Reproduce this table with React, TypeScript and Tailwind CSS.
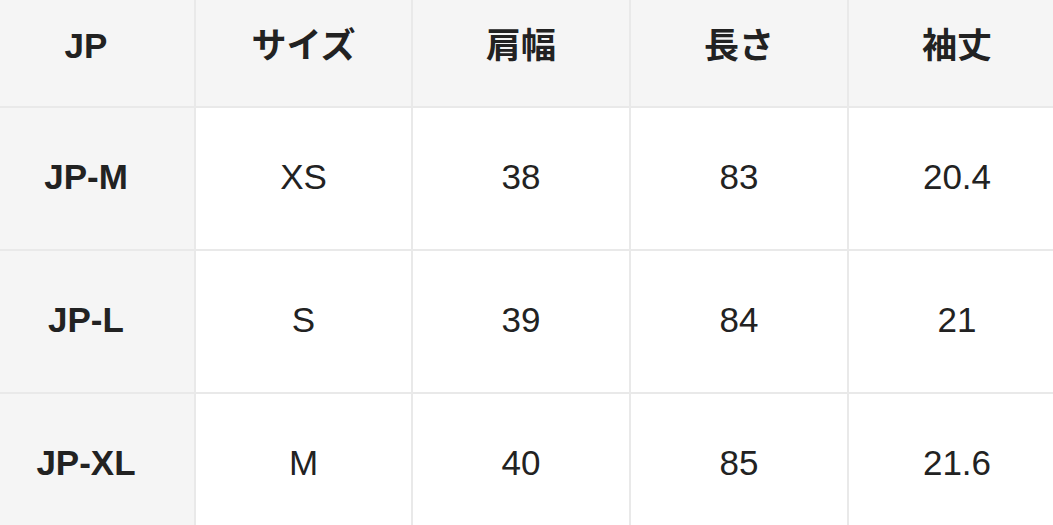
import React from "react";

const headers = ["JP", "サイズ", "肩幅", "長さ", "袖丈"];
const rows = [
  ["JP-M", "XS", "38", "83", "20.4"],
  ["JP-L", "S", "39", "84", "21"],
  ["JP-XL", "M", "40", "85", "21.6"],
];

export default function App() {
  return (
    <div
      className="w-[1053px] h-[525px] overflow-hidden bg-white"
      style={{ fontFamily: '"Liberation Sans", Arial, "Noto Sans CJK JP", sans-serif' }}
    >
      <div className="-ml-[22px] -mt-[12px] grid grid-cols-[216px_215px_216px_216px_216px] grid-rows-[118px_141px_141px_141px] gap-[2px] bg-[#e9e9e9] w-max">
        {headers.map((h) => (
          <div
            key={h}
            className="flex items-center justify-center bg-[#f5f5f5] text-[35px] font-bold text-[#222] pb-[2px]"
          >
            {h}
          </div>
        ))}
        {rows.map((r) =>
          r.map((c, i) => (
            <div
              key={r[0] + i}
              className={
                i === 0
                  ? "flex items-center justify-center bg-[#f5f5f5] text-[35px] font-bold text-[#222] pb-[2px]"
                  : "flex items-center justify-center bg-white text-[35px] text-[#222] pb-[2px]"
              }
            >
              {c}
            </div>
          ))
        )}
      </div>
    </div>
  );
}
